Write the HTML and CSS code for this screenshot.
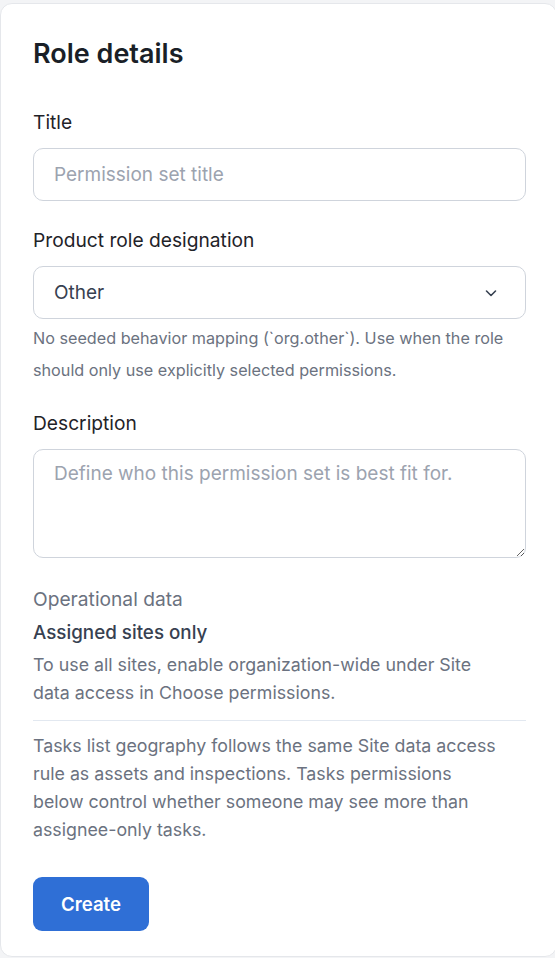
FILE: index.html
```html
<!DOCTYPE html>
<html lang="en">
<head>
<meta charset="utf-8">
<title>Role details</title>
<link rel="stylesheet" href="styles.css">
</head>
<body>
<div class="card">
  <h2 class="card-title">Role details</h2>
  <div class="field">
    <label class="label" for="title">Title</label>
    <input class="input" id="title" type="text" placeholder="Permission set title">
  </div>
  <div class="field field-hint">
    <label class="label" for="role">Product role designation</label>
    <div class="select">
      <span class="select-value">Other</span>
      <svg class="chevron" width="16" height="16" viewBox="0 0 16 16" fill="none"><path d="M3.5 6l4.5 4.5L12.5 6" stroke="#374151" stroke-width="1.6" stroke-linecap="round" stroke-linejoin="round"/></svg>
    </div>
    <p class="hint">No seeded behavior mapping (`org.other`). Use when the role should only use explicitly selected permissions.</p>
  </div>
  <div class="field field-last">
    <label class="label" for="desc">Description</label>
    <textarea class="textarea" id="desc" placeholder="Define who this permission set is best fit for."></textarea>
  </div>
  <div class="ops">
    <div class="ops-title">Operational data</div>
    <div class="ops-value">Assigned sites only</div>
    <p class="ops-text">To use all sites, enable organization-wide under Site data access in Choose permissions.</p>
    <hr class="divider">
    <p class="ops-text ops-tasks">Tasks list geography follows the same Site data access rule as assets and inspections. Tasks permissions below control whether someone may see more than assignee-only tasks.</p>
  </div>
  <button class="btn" type="button">Create</button>
</div>
</body>
</html>
```
FILE: styles.css
```css
* { box-sizing: border-box; }
html, body { margin: 0; padding: 0; }
body {
  background: #f3f4f6;
  font-family: Inter, "Noto Sans", sans-serif;
  padding-top: 3px;
  overflow: hidden;
}
.card {
  background: #ffffff;
  border: 1px solid #e5e7eb;
  border-radius: 12px;
  width: 557px;
  height: 954px;
  padding: 32px 29px 0 32px;
  display: flex;
  flex-direction: column;
  align-items: stretch;
}
.card-title {
  margin: 0 0 37px;
  font-size: 27px;
  line-height: 36px;
  font-weight: 600;
  color: #1a1f27;
}
.field { display: flex; flex-direction: column; margin-bottom: 26px; }
.field-hint { margin-bottom: 24px; }
.field-last { margin-bottom: 28px; }
.label {
  font-size: 19.2px;
  line-height: 26px;
  font-weight: 400;
  color: #1f2329;
  margin-bottom: 13px;
}
.input, .select, .textarea {
  width: 493px;
  border: 1px solid #cfd4dc;
  border-radius: 10px;
  background: #fff;
  font-family: inherit;
  font-size: 19px;
  color: #374151;
  padding: 0 20px;
}
.input { height: 53px; outline: none; }
.input::placeholder, .textarea::placeholder { color: #9ca3af; }
.select {
  height: 53px;
  display: flex;
  align-items: center;
  justify-content: space-between;
  padding-right: 26px;
}
.select-value { color: #374151; }
.hint {
  margin: 3px 0 0;
  font-size: 16.2px;
  line-height: 32px;
  color: #6b7280;
}
.textarea {
  height: 109px;
  padding-top: 12px;
  resize: vertical;
  outline: none;
  line-height: 24px;
}
.ops { display: flex; flex-direction: column; }
.ops-title {
  font-size: 19.2px;
  line-height: 26px;
  color: #6b7280;
  font-weight: 400;
}
.ops-value {
  margin-top: 8px;
  font-size: 18.8px;
  line-height: 26px;
  color: #374151;
  font-weight: 500;
}
.ops-text {
  margin: 5px 0 0;
  font-size: 17.8px;
  line-height: 28px;
  color: #6b7280;
  width: 464px;
}
.divider {
  width: 493px;
  margin: 13px 0 11px;
  border: 0;
  border-top: 1px solid #e2e8f0;
}
.ops-tasks { margin-top: 0; }
.btn {
  align-self: flex-start;
  margin-top: 33px;
  width: 116px;
  height: 54px;
  border: 0;
  border-radius: 9px;
  background: #2f6fd6;
  color: #fff;
  font-family: inherit;
  font-size: 18.6px;
  font-weight: 600;
}
```
